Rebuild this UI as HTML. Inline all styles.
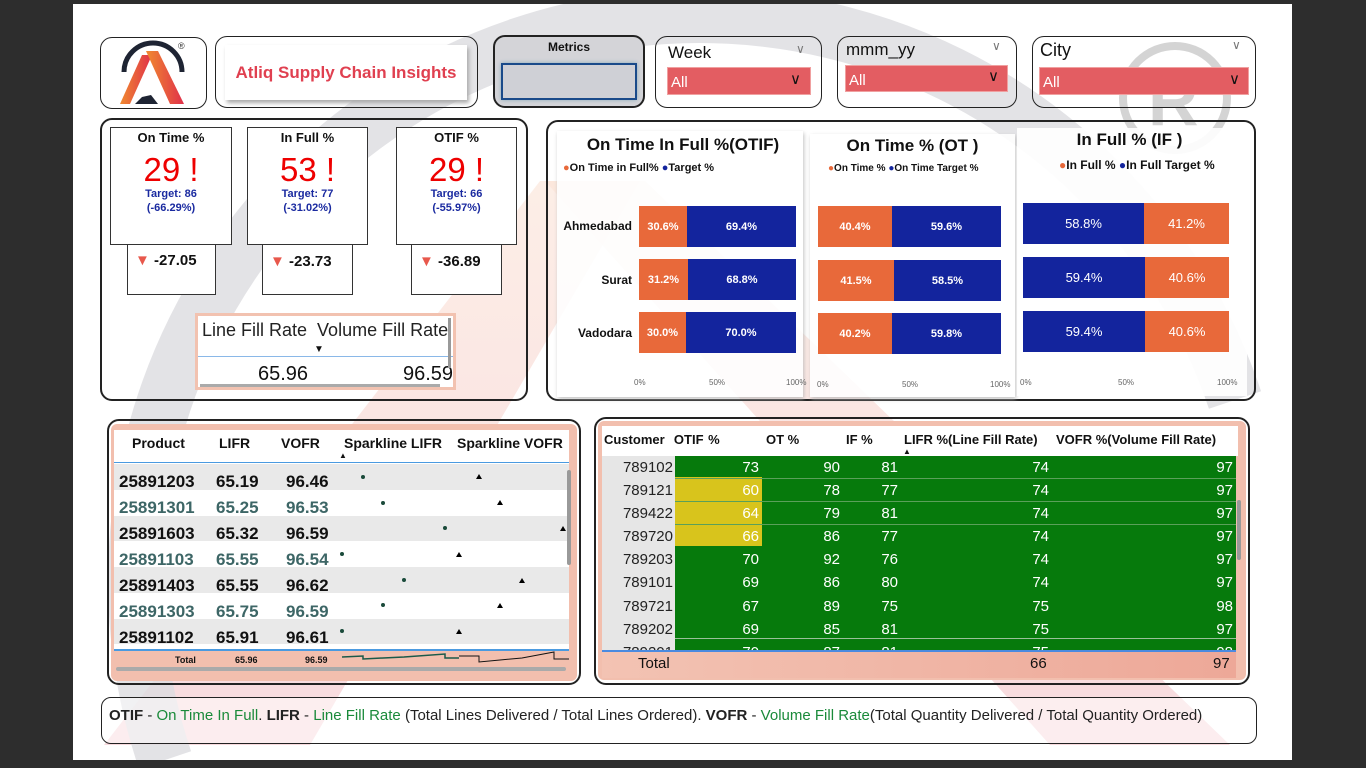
<!DOCTYPE html>
<html><head><meta charset="utf-8">
<style>
*{margin:0;padding:0;box-sizing:border-box}
body{width:1366px;height:768px;background:#2d2d2d;position:relative;overflow:hidden;font-family:"Liberation Sans",sans-serif;color:#111}
.a{position:absolute}
.box{position:absolute;border:1.5px solid #222;border-radius:12px;background:transparent}
.n{font-family:"Liberation Sans Narrow","Liberation Sans",sans-serif}
.card{position:absolute;border:1.5px solid #333;background:#fff;text-align:center}
.low{position:absolute;border:1.5px solid #333;border-top:none;background:#fff}
.red{position:absolute;background:#e35d62;color:#fff;font-size:15px;padding:6px 0 0 3px;border:1px solid #f0a0a0}
.bar{position:absolute;color:#fff;font-size:11px;font-weight:bold;display:flex;align-items:center;justify-content:center}
.o{background:#e8693a}.b{background:#13249d}
.ax{position:absolute;font-size:8px;color:#666}
.rl{position:absolute;font-size:12px;font-weight:bold;text-align:right}
.pt{font-size:17px;font-weight:bold}
</style></head><body>
<div class="a" style="left:73px;top:4px;width:1219px;height:756px;background:#fff"></div>

<!-- watermark -->
<svg class="a" style="left:73px;top:4px" width="1219" height="756">
<defs><linearGradient id="pk" x1="0" y1="0" x2="0" y2="1"><stop offset="0" stop-color="#fbe3d6"/><stop offset="1" stop-color="#f3c2c8"/></linearGradient></defs>
<polygon points="472,177 572,177 1157,741 977,741" fill="url(#pk)" opacity="0.6"/>
<polygon points="467,177 567,177 237,741 31,741" fill="url(#pk)" opacity="0.6"/>
<path d="M92,756 A550,550 0 1 1 1162,396" fill="none" stroke="#dcdce0" stroke-width="55" opacity="0.8"/>
<circle cx="1102" cy="94" r="52" fill="none" stroke="#d4d4d4" stroke-width="8"/>
<text x="1075" y="121" font-size="70" font-weight="bold" fill="#d4d4d4" font-family="Liberation Sans">R</text>
</svg>

<!-- logo -->
<div class="box" style="left:100px;top:37px;width:107px;height:72px;background:#fff"></div>
<svg class="a" style="left:100px;top:37px" width="107" height="72">
<defs><linearGradient id="g" x1="0" x2="1"><stop offset="0" stop-color="#f08a30"/><stop offset="1" stop-color="#e0304a"/></linearGradient></defs>
<path d="M24,35 A29,29 0 1 1 82,35" fill="none" stroke="#1e2433" stroke-width="5"/>
<polygon points="42,60 35,67 58,67 51,58" fill="#1e2433"/>
<polygon points="20,67 42,18 52,18 30,67" fill="url(#g)"/>
<polygon points="46,14 58,14 84,67 70,67" fill="url(#g)"/>
<text x="78" y="12" font-size="9" fill="#333">®</text>
</svg>

<!-- title -->
<div class="box" style="left:215px;top:36px;width:263px;height:72px"></div>
<div class="a" style="left:225px;top:45px;width:242px;height:55px;background:#fff;box-shadow:2px 3px 4px #aaa;color:#e04050;font-size:17px;font-weight:bold;text-align:center;line-height:55px">Atliq Supply Chain Insights</div>

<!-- metrics -->
<div class="box" style="left:493px;top:35px;width:152px;height:73px;background:#d4d4d8;border-width:2px"></div>
<div class="a n" style="left:493px;top:40px;width:152px;text-align:center;font-size:12px;font-weight:bold">Metrics</div>
<div class="a" style="left:501px;top:63px;width:136px;height:37px;border:2.5px solid #1a4a8a;background:#cfd0d6;box-shadow:0 0 4px #8ab"></div>

<!-- slicers -->
<div class="box" style="left:655px;top:36px;width:167px;height:72px"></div>
<div class="a n" style="left:668px;top:43px;font-size:17px">Week</div>
<div class="a" style="left:796px;top:42px;font-size:12px;color:#777">&#8744;</div>
<div class="red n" style="left:667px;top:67px;width:144px;height:28px">All</div>
<div class="a" style="left:790px;top:70px;color:#111;font-size:15px">&#8744;</div>

<div class="box" style="left:837px;top:36px;width:180px;height:72px"></div>
<div class="a n" style="left:846px;top:40px;font-size:17px">mmm_yy</div>
<div class="a" style="left:992px;top:39px;font-size:12px;color:#777">&#8744;</div>
<div class="red n" style="left:845px;top:65px;width:163px;height:27px">All</div>
<div class="a" style="left:988px;top:67px;color:#111;font-size:15px">&#8744;</div>

<div class="box" style="left:1032px;top:36px;width:224px;height:72px"></div>
<div class="a n" style="left:1040px;top:40px;font-size:18px">City</div>
<div class="a" style="left:1232px;top:38px;font-size:12px;color:#777">&#8744;</div>
<div class="red n" style="left:1039px;top:67px;width:210px;height:28px">All</div>
<div class="a" style="left:1229px;top:70px;color:#111;font-size:15px">&#8744;</div>

<!-- KPI panel -->
<div class="box" style="left:100px;top:118px;width:428px;height:283px;border-width:2px"></div>
<div class="card" style="left:110px;top:127px;width:122px;height:118px"><div class="n" style="font-size:13px;font-weight:bold;margin-top:2px">On Time %</div><div class="n" style="font-size:33px;color:#e00;margin-top:8px;line-height:34px">29 !</div><div style="font-size:11px;color:#1a2aa0;font-weight:bold;line-height:14px">Target: 86<br>(-66.29%)</div></div>
<div class="card" style="left:247px;top:127px;width:121px;height:118px"><div class="n" style="font-size:13px;font-weight:bold;margin-top:2px">In Full %</div><div class="n" style="font-size:33px;color:#e00;margin-top:8px;line-height:34px">53 !</div><div style="font-size:11px;color:#1a2aa0;font-weight:bold;line-height:14px">Target: 77<br>(-31.02%)</div></div>
<div class="card" style="left:396px;top:127px;width:121px;height:118px"><div class="n" style="font-size:13px;font-weight:bold;margin-top:2px">OTIF %</div><div class="n" style="font-size:33px;color:#e00;margin-top:8px;line-height:34px">29 !</div><div style="font-size:11px;color:#1a2aa0;font-weight:bold;line-height:14px">Target: 66<br>(-55.97%)</div></div>
<div class="low" style="left:127px;top:245px;width:89px;height:50px"></div>
<div class="low" style="left:262px;top:245px;width:91px;height:50px"></div>
<div class="low" style="left:411px;top:245px;width:91px;height:50px"></div>
<div class="a" style="left:135px;top:252px;font-size:15px;font-weight:bold"><span style="color:#e8584c">&#9660;</span> -27.05</div>
<div class="a" style="left:270px;top:253px;font-size:15px;font-weight:bold"><span style="color:#e8584c">&#9660;</span> -23.73</div>
<div class="a" style="left:419px;top:253px;font-size:15px;font-weight:bold"><span style="color:#e8584c">&#9660;</span> -36.89</div>

<div class="a" style="left:195px;top:313px;width:261px;height:77px;border:3px solid #f2c2b0;background:#fff;overflow:hidden">
<div style="font-size:18px;padding:4px 0 0 4px;white-space:nowrap;color:#222">Line Fill Rate&nbsp; Volume Fill Rate</div>
<div style="position:absolute;left:116px;top:28px;font-size:10px">&#9660;</div>
<div style="position:absolute;left:0;top:40px;width:255px;border-top:1px solid #8ab8e8"></div>
<div style="position:absolute;left:60px;top:47px;font-size:20px">65.96</div>
<div style="position:absolute;left:205px;top:47px;font-size:20px">96.59</div>
<div style="position:absolute;right:2px;top:2px;width:3px;height:50px;background:#999"></div>
<div style="position:absolute;left:2px;bottom:0;width:240px;height:3px;background:#aaa"></div>
</div>

<!-- charts panel -->
<div class="box" style="left:546px;top:120px;width:710px;height:281px;border-width:2px"></div>
<div class="a" style="left:557px;top:131px;width:246px;height:266px;background:#fff;box-shadow:1px 2px 4px #bbb;opacity:.9"></div>
<div class="a" style="left:810px;top:134px;width:205px;height:263px;background:#fff;box-shadow:1px 2px 4px #bbb;opacity:.9"></div>
<div class="a" style="left:1017px;top:128px;width:230px;height:268px;background:#fff;opacity:.9"></div>

<div class="a n" style="left:557px;top:135px;width:252px;text-align:center;font-size:17px;font-weight:bold">On Time In Full %(OTIF)</div>
<div class="a n" style="left:563px;top:162px;font-size:11px;font-weight:bold"><span style="color:#e8693a">●</span>On Time in Full% <span style="color:#13249d">●</span>Target %</div>
<div class="a n" style="left:810px;top:136px;width:205px;text-align:center;font-size:17px;font-weight:bold">On Time % (OT )</div>
<div class="a n" style="left:828px;top:163px;font-size:10px;font-weight:bold"><span style="color:#e8693a">●</span>On Time % <span style="color:#13249d">●</span>On Time Target %</div>
<div class="a n" style="left:1017px;top:130px;width:225px;text-align:center;font-size:17px;font-weight:bold">In Full % (IF )</div>
<div class="a n" style="left:1059px;top:158px;font-size:12px;font-weight:bold"><span style="color:#e8693a">●</span>In Full % <span style="color:#13249d">●</span>In Full Target %</div>

<div class="rl n" style="left:555px;top:219px;width:77px">Ahmedabad</div>
<div class="rl n" style="left:555px;top:273px;width:77px">Surat</div>
<div class="rl n" style="left:555px;top:326px;width:77px">Vadodara</div>
<div class="bar o" style="left:639px;top:206px;width:48px;height:41px">30.6%</div><div class="bar b" style="left:687px;top:206px;width:109px;height:41px">69.4%</div>
<div class="bar o" style="left:639px;top:259px;width:49px;height:41px">31.2%</div><div class="bar b" style="left:688px;top:259px;width:108px;height:41px">68.8%</div>
<div class="bar o" style="left:639px;top:312px;width:47px;height:41px">30.0%</div><div class="bar b" style="left:686px;top:312px;width:110px;height:41px">70.0%</div>
<div class="ax" style="left:634px;top:378px">0%</div><div class="ax" style="left:709px;top:378px">50%</div><div class="ax" style="left:786px;top:378px">100%</div>

<div class="bar o" style="left:818px;top:206px;width:74px;height:41px">40.4%</div><div class="bar b" style="left:892px;top:206px;width:109px;height:41px">59.6%</div>
<div class="bar o" style="left:818px;top:260px;width:76px;height:41px">41.5%</div><div class="bar b" style="left:894px;top:260px;width:107px;height:41px">58.5%</div>
<div class="bar o" style="left:818px;top:313px;width:74px;height:41px">40.2%</div><div class="bar b" style="left:892px;top:313px;width:109px;height:41px">59.8%</div>
<div class="ax" style="left:817px;top:380px">0%</div><div class="ax" style="left:902px;top:380px">50%</div><div class="ax" style="left:990px;top:380px">100%</div>

<div class="bar b" style="left:1023px;top:203px;width:121px;height:41px;font-size:13px;font-weight:normal">58.8%</div><div class="bar o" style="left:1144px;top:203px;width:85px;height:41px;font-size:13px;font-weight:normal">41.2%</div>
<div class="bar b" style="left:1023px;top:257px;width:122px;height:41px;font-size:13px;font-weight:normal">59.4%</div><div class="bar o" style="left:1145px;top:257px;width:84px;height:41px;font-size:13px;font-weight:normal">40.6%</div>
<div class="bar b" style="left:1023px;top:311px;width:122px;height:41px;font-size:13px;font-weight:normal">59.4%</div><div class="bar o" style="left:1145px;top:311px;width:84px;height:41px;font-size:13px;font-weight:normal">40.6%</div>
<div class="ax" style="left:1020px;top:378px">0%</div><div class="ax" style="left:1118px;top:378px">50%</div><div class="ax" style="left:1217px;top:378px">100%</div>

<!-- product table -->
<div class="box" style="left:107px;top:419px;width:474px;height:266px;border-width:2px"></div>
<div class="a" style="left:111px;top:424px;width:466px;height:257px;background:#f2bfae;border-radius:6px"></div>
<div class="a" style="left:114px;top:430px;width:455px;height:219px;background:#fff"></div>
<div class="a" style="left:114px;top:462px;width:455px;border-top:1px solid #4a9ae0"></div>
<div class="a" style="left:132px;top:435px;font-size:14px;font-weight:bold">Product</div>
<div class="a" style="left:219px;top:435px;font-size:14px;font-weight:bold">LIFR</div>
<div class="a" style="left:281px;top:435px;font-size:14px;font-weight:bold">VOFR</div>
<div class="a" style="left:344px;top:435px;font-size:14px;font-weight:bold">Sparkline LIFR</div>
<div class="a" style="left:457px;top:435px;font-size:14px;font-weight:bold">Sparkline VOFR</div>
<div class="a" style="left:339px;top:451px;font-size:8px">&#9650;</div>
<div class="a" style="left:114px;top:464px;width:455px;height:185px">
<div style="position:absolute;top:0;width:100%;height:26px;background:#e9e9e9"></div>
<div style="position:absolute;top:52px;width:100%;height:25px;background:#e9e9e9"></div>
<div style="position:absolute;top:103px;width:100%;height:26px;background:#e9e9e9"></div>
<div style="position:absolute;top:155px;width:100%;height:25px;background:#e9e9e9"></div>
</div>
<div class="a pt" style="left:119px;top:469px;line-height:26px;color:#111">25891203<br><span style="color:#3d6666">25891301</span><br>25891603<br><span style="color:#3d6666">25891103</span><br>25891403<br><span style="color:#3d6666">25891303</span><br>25891102</div>
<div class="a pt" style="left:216px;top:469px;line-height:26px">65.19<br><span style="color:#3d6666">65.25</span><br>65.32<br><span style="color:#3d6666">65.55</span><br>65.55<br><span style="color:#3d6666">65.75</span><br>65.91</div>
<div class="a pt" style="left:286px;top:469px;line-height:26px">96.46<br><span style="color:#3d6666">96.53</span><br>96.59<br><span style="color:#3d6666">96.54</span><br>96.62<br><span style="color:#3d6666">96.59</span><br>96.61</div>
<svg class="a" style="left:114px;top:464px" width="455" height="210">
<g fill="#1a4a3a"><circle cx="249" cy="13" r="2"/><circle cx="269" cy="39" r="2"/><circle cx="331" cy="64" r="2"/><circle cx="228" cy="90" r="2"/><circle cx="290" cy="116" r="2"/><circle cx="269" cy="141" r="2"/><circle cx="228" cy="167" r="2"/></g>
<g fill="#000"><polygon points="365,10 368,15 362,15"/><polygon points="386,36 389,41 383,41"/><polygon points="449,62 452,67 446,67"/><polygon points="345,88 348,93 342,93"/><polygon points="408,114 411,119 405,119"/><polygon points="386,139 389,144 383,144"/><polygon points="345,165 348,170 342,170"/></g>
<polyline points="228,193 249,192 249,195 269,194 290,193 331,190 331,194 345,194" fill="none" stroke="#1a5a4a" stroke-width="1.5"/>
<polyline points="345,192 365,192 365,198 386,196 408,194 440,188 440,195 455,195" fill="none" stroke="#111" stroke-width="1"/>
</svg>
<div class="a" style="left:114px;top:649px;width:455px;border-top:2px solid #4a9ae0"></div>
<div class="a" style="left:175px;top:655px;font-size:9px;font-weight:bold">Total</div>
<div class="a" style="left:235px;top:655px;font-size:9px;font-weight:bold">65.96</div>
<div class="a" style="left:305px;top:655px;font-size:9px;font-weight:bold">96.59</div>
<div class="a" style="left:116px;top:667px;width:450px;height:4px;background:#aaa;border-radius:2px"></div>
<div class="a" style="left:567px;top:470px;width:4px;height:95px;background:#999;border-radius:2px"></div>

<!-- customer table -->
<div class="box" style="left:594px;top:417px;width:656px;height:268px;border-width:2px"></div>
<div class="a" style="left:598px;top:421px;width:648px;height:259px;background:#f2bfae;border-radius:6px"></div>
<div class="a" style="left:602px;top:426px;width:636px;height:30px;background:#fff"></div>
<div class="a n" style="left:604px;top:432px;font-size:13px;font-weight:bold;word-spacing:1px;white-space:nowrap">Customer&nbsp; OTIF %</div>
<div class="a n" style="left:766px;top:432px;font-size:13px;font-weight:bold">OT %</div>
<div class="a n" style="left:846px;top:432px;font-size:13px;font-weight:bold">IF %</div>
<div class="a n" style="left:904px;top:432px;font-size:13px;font-weight:bold">LIFR %(Line Fill Rate)</div>
<div class="a n" style="left:1056px;top:432px;font-size:13px;font-weight:bold">VOFR %(Volume Fill Rate)</div>
<div class="a" style="left:903px;top:447px;font-size:8px">&#9650;</div>
<div class="a" style="left:602px;top:456px;width:73px;height:194px;background:#e6e6e6"></div>
<div class="a" style="left:675px;top:456px;width:561px;height:194px;background:#067a0c"></div>
<div class="a" style="left:675px;top:477px;width:87px;height:69px;background:#d8c41c"></div>
<div class="a" style="left:675px;top:478px;width:561px;border-top:1px solid #5aa05a"></div>
<div class="a" style="left:675px;top:501px;width:561px;border-top:1px solid #5aa05a"></div>
<div class="a" style="left:675px;top:524px;width:561px;border-top:1px solid #5aa05a"></div>
<div class="a" style="left:675px;top:638px;width:561px;border-top:1px solid #9ac09a"></div>
<div class="a n" style="left:602px;top:456px;width:636px;height:194px;overflow:hidden;font-size:15px;line-height:23.1px">
<div style="position:absolute;left:0;width:71px;text-align:right;color:#222">789102<br>789121<br>789422<br>789720<br>789203<br>789101<br>789721<br>789202<br>789201</div>
<div style="position:absolute;left:100px;width:57px;text-align:right;color:#fff">73<br>60<br>64<br>66<br>70<br>69<br>67<br>69<br>70</div>
<div style="position:absolute;left:180px;width:58px;text-align:right;color:#fff">90<br>78<br>79<br>86<br>92<br>86<br>89<br>85<br>87</div>
<div style="position:absolute;left:240px;width:56px;text-align:right;color:#fff">81<br>77<br>81<br>77<br>76<br>80<br>75<br>81<br>81</div>
<div style="position:absolute;left:380px;width:67px;text-align:right;color:#fff">74<br>74<br>74<br>74<br>74<br>74<br>75<br>75<br>75</div>
<div style="position:absolute;left:560px;width:71px;text-align:right;color:#fff">97<br>97<br>97<br>97<br>97<br>97<br>98<br>97<br>98</div>
</div>
<div class="a" style="left:602px;top:650px;width:634px;border-top:2px solid #4a8ae0"></div>
<div class="a" style="left:602px;top:652px;width:634px;height:26px;background:linear-gradient(90deg,#f3c3b3,#eda898)"></div>
<div class="a n" style="left:638px;top:655px;font-size:15px">Total</div>
<div class="a n" style="left:1030px;top:655px;font-size:15px">66</div>
<div class="a n" style="left:1213px;top:655px;font-size:15px">97</div>
<div class="a" style="left:1237px;top:500px;width:4px;height:60px;background:#999;border-radius:2px"></div>

<!-- footer -->
<div class="box" style="left:101px;top:697px;width:1156px;height:47px;border-radius:10px;background:rgba(255,255,255,.5)"></div>
<div class="a n" style="left:109px;top:707px;font-size:15px;white-space:nowrap;color:#222"><b>OTIF</b> - <span style="color:#1a8a3a">On Time In Full</span>. <b>LIFR</b> - <span style="color:#1a8a3a">Line Fill Rate</span> (Total Lines Delivered / Total Lines Ordered). <b>VOFR</b> - <span style="color:#1a8a3a">Volume Fill Rate</span>(Total Quantity Delivered / Total Quantity Ordered)</div>
</body></html>
